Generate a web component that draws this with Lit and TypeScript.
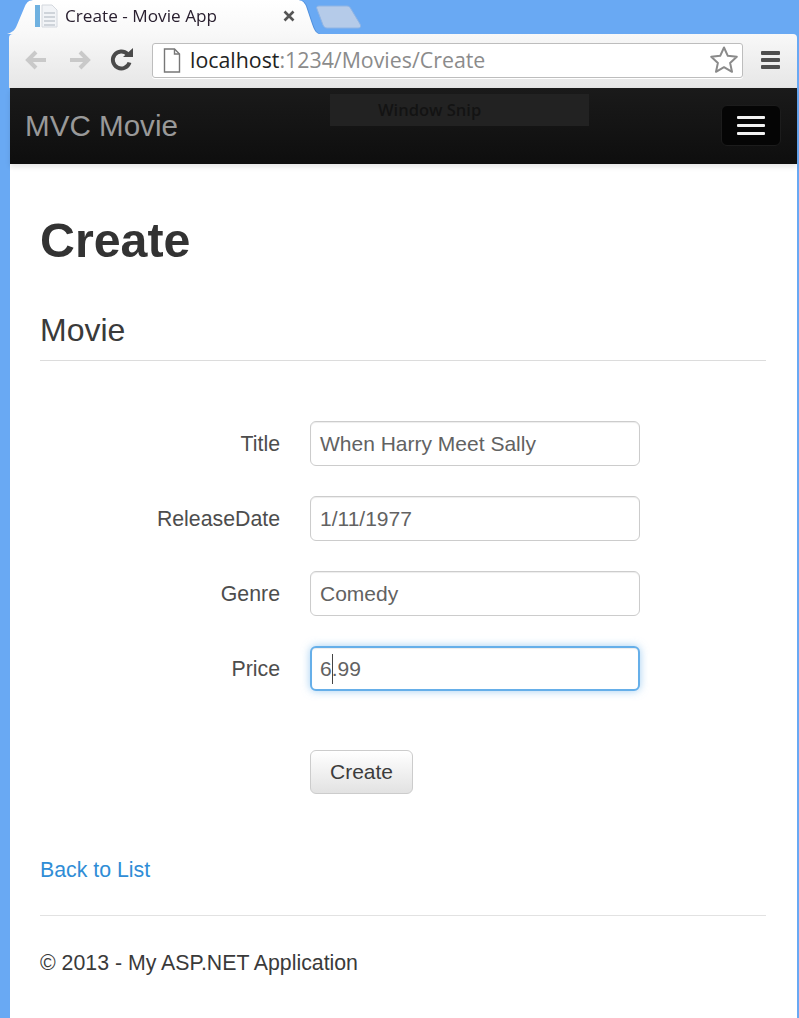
import { LitElement, html, css } from "lit";
import { customElement } from "lit/decorators.js";

const rows = [
  { label: "Title", value: "When Harry Meet Sally" },
  { label: "ReleaseDate", value: "1/11/1977" },
  { label: "Genre", value: "Comedy" },
];

@customElement("app-root")
export class AppRoot extends LitElement {
  static styles = css`
    :host { display: block; width: 799px; height: 1018px; overflow: hidden; background: #69a9f3; font-family: "Liberation Sans", Arial, sans-serif; color: #333; }
    .window { margin-left: 9px; margin-right: 2px; height: 1018px; display: flex; flex-direction: column; }
    .tabstrip { height: 34px; display: flex; align-items: flex-start; flex: none; margin-left: -2px; }
    .tab-edge { flex: none; filter: drop-shadow(1px 0 0 #4f8fdc); }
    .tab { width: 312px; height: 34px; box-sizing: border-box; padding-bottom: 2px; background: linear-gradient(#ffffff, #f8f8f8); display: flex; align-items: center; clip-path: path("M0 34 C6 32 8 30 10 25 L18 6 C20 2 22 0 28 0 L290 0 C295 0 297 2 299 6 L305 24 C307 30 309 33 312 34 Z"); }
    .favicon { margin-left: 28px; flex: none; display: block; }
    .tab-title { margin-left: 6px; font: 17.2px/1 "Open Sans", sans-serif; color: #2a2030; white-space: nowrap; flex: 1; }
    .tab-close { margin-right: 24px; flex: none; display: block; }
    .newtab { flex: none; margin: 5px 0 0 -5px; display: block; }
    .toolbar { height: 54px; flex: none; box-sizing: border-box; padding-bottom: 2px; display: flex; align-items: center; background: linear-gradient(#f8f8f8, #e6e6e6); border-radius: 4px 4px 0 0; }
    .nav-ic { flex: none; display: block; }
    .back { margin-left: 15px; }
    .fwd { margin-left: 18px; }
    .reload { margin-left: 18px; }
    .omni { margin-left: 18px; width: 591px; height: 35px; box-sizing: border-box; flex: none; background: #fff; border: 1px solid #bdbdbd; border-radius: 3px; display: flex; align-items: center; box-shadow: 0 1px 0 #fff; }
    .page-ic { margin-left: 10px; flex: none; display: block; }
    .url { margin-left: 9px; font: 21.35px/1 "Open Sans", sans-serif; color: #8b8b8b; white-space: nowrap; flex: 1; }
    .url b { font-weight: 400; color: #222; }
    .star { margin-right: 4px; flex: none; display: block; }
    .menu { margin-left: 18px; flex: none; display: flex; flex-direction: column; gap: 3px; width: 19px; }
    .menu i { display: block; height: 4px; background: #4e4e4e; border-radius: 1px; }
    .navbar { position: relative; height: 76px; flex: none; background: linear-gradient(#1a1a1a, #0e0e0e); display: flex; align-items: center; justify-content: space-between; padding: 0 16px 0 15px; margin-left: 1px; box-shadow: 0 3px 5px rgba(0,0,0,.1); }
    .brand { font-size: 29.6px; color: #999; }
    .toggle { width: 60px; height: 41px; box-sizing: border-box; background: #050505; border: 1px solid #1c1c1c; border-radius: 6px; display: flex; flex-direction: column; justify-content: center; align-items: center; gap: 5px; margin-top: -1px; }
    .toggle i { display: block; width: 28px; height: 3px; background: #f2f2f2; border-radius: 1px; }
    .snip { position: absolute; left: 320px; top: 6px; width: 259px; height: 32px; background: #222; color: #131313; font: 600 16.5px/32px "Open Sans", sans-serif; box-sizing: border-box; padding-left: 48px; }
    .page { flex: 1; background: #fff; margin-left: 1px; padding: 0 31px 0 30px; }
    h1 { margin: 50px 0 0; font-size: 48.3px; line-height: 53px; font-weight: 700; color: #333; }
    h2 { margin: 45px 0 0; font-size: 32px; line-height: 36px; font-weight: 400; color: #3a3a3a; }
    .rule { border: 0; border-top: 1px solid #dcdcdc; margin: 12px 0 0; }
    form { margin-top: 60px; display: flex; flex-direction: column; gap: 31px; }
    .row { display: flex; align-items: center; height: 44px; }
    label { width: 240px; flex: none; text-align: right; font-size: 21.3px; color: #4d4d4d; padding-top: 2px; }
    .input { margin-left: 30px; width: 330px; height: 45px; box-sizing: border-box; border: 1px solid #ccc; border-radius: 6px; padding: 2px 9px 0; display: flex; align-items: center; font-size: 21px; color: #626262; box-shadow: inset 0 1px 1px rgba(0,0,0,.075); background: #fff; white-space: nowrap; }
    .input.focus { border: 2px solid #66afe9; padding: 1px 8px 0; box-shadow: inset 0 1px 1px rgba(0,0,0,.075), 0 0 8px rgba(102,175,233,.6); }
    .caret { display: inline-block; width: 1px; height: 30px; background: #444; margin-right: -1px; }
    .btn-row { margin-top: 60px; padding-left: 270px; }
    .btn { width: 103px; height: 44px; box-sizing: border-box; display: flex; align-items: center; justify-content: center; border: 1px solid #ccc; border-radius: 6px; background: linear-gradient(#fff, #e2e2e2); font-size: 21px; color: #3c3c3c; }
    .back-link { margin-top: 61px; font-size: 21.3px; line-height: 30px; color: #2f8dd6; display: block; text-decoration: none; }
    .rule2 { border: 0; border-top: 1px solid #e2e2e2; margin: 30px 0 0; }
    footer { margin-top: 32px; font-size: 21.3px; line-height: 30px; color: #3a3a3a; }
  `;

  render() {
    return html`
      <div class="window">
        <div class="tabstrip">
          <div class="tab-edge"><div class="tab">
            <svg class="favicon" width="24" height="24" viewBox="0 0 24 24"><rect x="0" y="1" width="5" height="22" fill="#6fb1e0"/><path d="M7 1h10l5 5v17H7z" fill="#f2f4f7" stroke="#d4d8de"/><path d="M9 9h11M9 13h11M9 17h11M9 21h11" stroke="#cfd4da" stroke-width="2"/></svg>
            <span class="tab-title">Create - Movie App</span>
            <svg class="tab-close" width="12" height="12" viewBox="0 0 12 12"><path d="M1.5 1.5l9 9M10.5 1.5l-9 9" stroke="#555" stroke-width="2.6"/></svg>
          </div></div>
          <svg class="newtab" width="50" height="24" viewBox="0 0 50 24"><path d="M5 1h28c2 0 3 1 4 3l9 15c1 2 1 4-2 4H13c-2 0-3-1-4-3L3 4C2 2 3 1 5 1z" fill="#b5cbe9" stroke="#8fb4e4"/></svg>
        </div>
        <div class="toolbar">
          <svg class="nav-ic back" width="25" height="22" viewBox="0 0 25 22"><path d="M22 11H5M12 3l-8 8 8 8" fill="none" stroke="#c9c9c9" stroke-width="4"/></svg>
          <svg class="nav-ic fwd" width="25" height="22" viewBox="0 0 25 22"><path d="M3 11h17M13 3l8 8-8 8" fill="none" stroke="#c9c9c9" stroke-width="4"/></svg>
          <svg class="nav-ic reload" width="24" height="24" viewBox="0 0 24 24"><path d="M19.5 14.5A8.5 8.5 0 1 1 17.5 6" fill="none" stroke="#4a4a4a" stroke-width="4"/><path d="M13 9h10V0z" fill="#4a4a4a"/></svg>
          <div class="omni">
            <svg class="page-ic" width="18" height="25" viewBox="0 0 18 25"><path d="M1.5 1h10l5 5v18h-15z" fill="#fff" stroke="#777" stroke-width="1.4"/><path d="M11.5 1v5h5" fill="none" stroke="#777" stroke-width="1.4"/></svg>
            <span class="url"><b>localhost</b>:1234/Movies/Create</span>
            <svg class="star" width="28" height="28" viewBox="0 0 28 28"><path d="M14 1.5l3.8 8.3 9 1-6.7 6.1 1.9 8.9L14 21.2 6 25.8l1.9-8.9-6.7-6.1 9-1z" fill="#fff" stroke="#8a8a8a" stroke-width="2" stroke-linejoin="round"/></svg>
          </div>
          <div class="menu"><i></i><i></i><i></i></div>
        </div>
        <div class="navbar">
          <span class="brand">MVC Movie</span>
          <div class="snip">Window Snip</div>
          <div class="toggle"><i></i><i></i><i></i></div>
        </div>
        <div class="page">
          <h1>Create</h1>
          <h2>Movie</h2>
          <hr class="rule" />
          <form>
            ${rows.map((r) => html`<div class="row"><label>${r.label}</label><div class="input">${r.value}</div></div>`)}
            <div class="row"><label>Price</label><div class="input focus">6<span class="caret"></span>.99</div></div>
          </form>
          <div class="btn-row"><div class="btn">Create</div></div>
          <a class="back-link">Back to List</a>
          <hr class="rule2" />
          <footer>© 2013 - My ASP.NET Application</footer>
        </div>
      </div>
    `;
  }
}
